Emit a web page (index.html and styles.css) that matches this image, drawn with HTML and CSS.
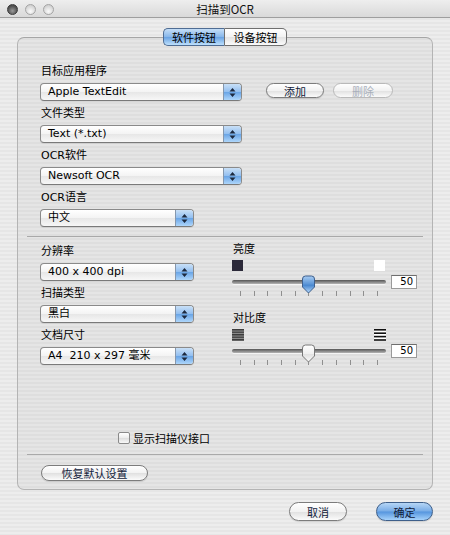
FILE: index.html
```html
<!DOCTYPE html>
<html lang="zh">
<head>
<meta charset="utf-8">
<title>扫描到OCR</title>
<link rel="stylesheet" href="styles.css">
</head>
<body>
<div class="window">
  <div class="titlebar">
    <div class="lights">
      <span class="light close"></span>
      <span class="light"></span>
      <span class="light"></span>
    </div>
    <div class="title">扫描到OCR</div>
  </div>

  <div class="tabs">
    <span class="tab sel">软件按钮</span><span class="tab">设备按钮</span>
  </div>

  <div class="box">
    <div class="sec1">
      <div class="field">
        <div class="label">目标应用程序</div>
        <div class="row">
          <div class="popup w-wide"><span class="ptext">Apple TextEdit</span><span class="arrows"><svg width="7" height="11" viewBox="0 0 7 11"><path d="M3.5 1 L6.5 4.5 L0.5 4.5 Z M0.5 6.5 L6.5 6.5 L3.5 10 Z" fill="#1d2a40"/></svg></span></div>
          <span class="btn mini add">添加</span>
          <span class="btn mini del disabled">删除</span>
        </div>
      </div>
      <div class="field">
        <div class="label">文件类型</div>
        <div class="popup w-wide"><span class="ptext">Text (*.txt)</span><span class="arrows"><svg width="7" height="11" viewBox="0 0 7 11"><path d="M3.5 1 L6.5 4.5 L0.5 4.5 Z M0.5 6.5 L6.5 6.5 L3.5 10 Z" fill="#1d2a40"/></svg></span></div>
      </div>
      <div class="field">
        <div class="label">OCR软件</div>
        <div class="popup w-wide"><span class="ptext">Newsoft OCR</span><span class="arrows"><svg width="7" height="11" viewBox="0 0 7 11"><path d="M3.5 1 L6.5 4.5 L0.5 4.5 Z M0.5 6.5 L6.5 6.5 L3.5 10 Z" fill="#1d2a40"/></svg></span></div>
      </div>
      <div class="field">
        <div class="label">OCR语言</div>
        <div class="popup w-short"><span class="ptext">中文</span><span class="arrows"><svg width="7" height="11" viewBox="0 0 7 11"><path d="M3.5 1 L6.5 4.5 L0.5 4.5 Z M0.5 6.5 L6.5 6.5 L3.5 10 Z" fill="#1d2a40"/></svg></span></div>
      </div>
    </div>

    <div class="sep sep1"></div>

    <div class="sec2">
      <div class="col-left">
        <div class="field">
          <div class="label">分辨率</div>
          <div class="popup w-short"><span class="ptext">400 x 400 dpi</span><span class="arrows"><svg width="7" height="11" viewBox="0 0 7 11"><path d="M3.5 1 L6.5 4.5 L0.5 4.5 Z M0.5 6.5 L6.5 6.5 L3.5 10 Z" fill="#1d2a40"/></svg></span></div>
        </div>
        <div class="field">
          <div class="label">扫描类型</div>
          <div class="popup w-short"><span class="ptext">黑白</span><span class="arrows"><svg width="7" height="11" viewBox="0 0 7 11"><path d="M3.5 1 L6.5 4.5 L0.5 4.5 Z M0.5 6.5 L6.5 6.5 L3.5 10 Z" fill="#1d2a40"/></svg></span></div>
        </div>
        <div class="field">
          <div class="label">文档尺寸</div>
          <div class="popup w-short"><span class="ptext">A4&nbsp; 210 x 297 毫米</span><span class="arrows"><svg width="7" height="11" viewBox="0 0 7 11"><path d="M3.5 1 L6.5 4.5 L0.5 4.5 Z M0.5 6.5 L6.5 6.5 L3.5 10 Z" fill="#1d2a40"/></svg></span></div>
        </div>
      </div>

      <div class="col-right">
        <div class="label rlabel">亮度</div>
        <div class="ends">
          <span class="sq sq-dark"></span>
          <span class="sq sq-white"></span>
        </div>
        <div class="slider-row">
          <div class="slider">
            <div class="track"></div>
            <div class="ticks"><i></i><i></i><i></i><i></i><i></i><i></i><i></i><i></i><i></i><i></i><i></i></div>
            <svg class="thumb" width="15" height="19" viewBox="0 0 15 19">
              <defs>
                <linearGradient id="gb" x1="0" y1="0" x2="0" y2="1">
                  <stop offset="0" stop-color="#a9cdf3"/>
                  <stop offset="0.45" stop-color="#5f98d8"/>
                  <stop offset="0.55" stop-color="#4a88d0"/>
                  <stop offset="1" stop-color="#b6dafc"/>
                </linearGradient>
              </defs>
              <path d="M1.5 4 Q1.5 1 4.5 1 L10.5 1 Q13.5 1 13.5 4 L13.5 12 L7.5 18 L1.5 12 Z" fill="url(#gb)" stroke="#3e5f8c" stroke-width="1"/>
            </svg>
          </div>
          <div class="num">50</div>
        </div>

        <div class="label rlabel lbl-contrast">对比度</div>
        <div class="ends">
          <svg class="cicon" width="12" height="12" viewBox="0 0 12 12">
            <rect x="0" y="0" width="12" height="12" fill="#8a8a8a"/>
            <rect x="0" y="0" width="12" height="1.5" fill="#3c3c3c"/>
            <rect x="0" y="2.5" width="12" height="1.5" fill="#4a4a4a"/>
            <rect x="0" y="5" width="12" height="1.5" fill="#3c3c3c"/>
            <rect x="0" y="7.5" width="12" height="1.5" fill="#4a4a4a"/>
            <rect x="0" y="10" width="12" height="1.5" fill="#3c3c3c"/>
          </svg>
          <svg class="cicon" width="12" height="12" viewBox="0 0 12 12">
            <rect x="0" y="0" width="12" height="12" fill="#ffffff"/>
            <rect x="0" y="0" width="12" height="1.6" fill="#111"/>
            <rect x="0" y="3.4" width="12" height="1.6" fill="#111"/>
            <rect x="0" y="6.8" width="12" height="1.6" fill="#111"/>
            <rect x="0" y="10.2" width="12" height="1.6" fill="#111"/>
          </svg>
        </div>
        <div class="slider-row">
          <div class="slider">
            <div class="track"></div>
            <div class="ticks"><i></i><i></i><i></i><i></i><i></i><i></i><i></i><i></i><i></i><i></i><i></i></div>
            <svg class="thumb" width="15" height="19" viewBox="0 0 15 19">
              <defs>
                <linearGradient id="gw" x1="0" y1="0" x2="0" y2="1">
                  <stop offset="0" stop-color="#ffffff"/>
                  <stop offset="0.5" stop-color="#f0f0f0"/>
                  <stop offset="0.55" stop-color="#e2e2e2"/>
                  <stop offset="1" stop-color="#fafafa"/>
                </linearGradient>
              </defs>
              <path d="M1.5 4 Q1.5 1 4.5 1 L10.5 1 Q13.5 1 13.5 4 L13.5 12 L7.5 18 L1.5 12 Z" fill="url(#gw)" stroke="#777" stroke-width="1"/>
            </svg>
          </div>
          <div class="num">50</div>
        </div>
      </div>
    </div>

    <div class="check-row">
      <span class="checkbox"></span>
      <span class="check-label">显示扫描仪接口</span>
    </div>

    <div class="sep sep2"></div>

    <div class="restore-row">
      <span class="btn restore">恢复默认设置</span>
    </div>
  </div>

  <div class="footer">
    <span class="btn big cancel">取消</span>
    <span class="btn big ok">确定</span>
  </div>
</div>
</body>
</html>
```

FILE: styles.css
```css
html, body {
  margin: 0;
  padding: 0;
}

body {
  width: 450px;
  height: 535px;
  overflow: hidden;
  font-family: "DejaVu Sans", "Noto Sans CJK SC", sans-serif;
  font-size: 11px;
  color: #000;
}

.window {
  width: 450px;
  height: 535px;
  background: repeating-linear-gradient(to bottom, #ededed 0, #ededed 2px, #e6e6e6 2px, #e6e6e6 4px);
  display: flex;
  flex-direction: column;
}

/* title bar */
.titlebar {
  height: 18px;
  box-sizing: border-box;
  border-bottom: 1px solid #9e9e9e;
  background: linear-gradient(to bottom, #eeeeee, #d9d9d9);
  display: flex;
  align-items: center;
}

.lights {
  display: flex;
  gap: 7px;
  padding-left: 7px;
  padding-top: 1px;
}

.light {
  width: 11px;
  height: 11px;
  box-sizing: border-box;
  border-radius: 50%;
  border: 1px solid #a4a4a4;
  background: radial-gradient(circle at 50% 70%, #fafafa, #d4d4d4 70%, #c2c2c2);
}

.light.close {
  border-color: #3a3a3a;
  background: radial-gradient(circle at 50% 65%, #9a9a9a, #555 60%, #3a3a3a);
}

.title {
  flex: 1;
  text-align: center;
  margin-left: -54px;
  font-family: "Noto Sans CJK SC", "DejaVu Sans", sans-serif;
  font-size: 11.5px;
  line-height: 16px;
  color: #111;
}

/* tabs */
.tabs {
  display: flex;
  justify-content: center;
  margin-top: 10px;
  position: relative;
  z-index: 1;
}

.tab {
  height: 18px;
  box-sizing: border-box;
  width: 62px;
  border: 1px solid #6f6f6f;
  font-family: "Noto Sans CJK SC", sans-serif;
  font-size: 11px;
  line-height: 16px;
  text-align: center;
  color: #000;
  background: linear-gradient(to bottom, #ffffff, #f2f2f2 50%, #e3e3e3 52%, #fbfbfb);
}

.tab.sel {
  border-radius: 5px 0 0 5px;
  border-color: #4f6d94;
  border-right-color: #6f6f6f;
  background: linear-gradient(to bottom, #c5def7, #86b6ea 50%, #6aa3e3 52%, #bde0fd);
}

.tab:last-child {
  border-radius: 0 5px 5px 0;
  border-left: none;
}

/* group box */
.box {
  margin: -9px 17px 0 17px;
  height: 453px;
  box-sizing: border-box;
  border: 1px solid #b4b4b4;
  border-top-color: #a6a6a6;
  border-radius: 7px;
  background: rgba(0, 0, 0, 0.03);
  padding: 27px 22px 0 22px;
  display: flex;
  flex-direction: column;
}

.sec1 {
  display: flex;
  flex-direction: column;
  gap: 6px;
}

.field {
  display: flex;
  flex-direction: column;
  gap: 4px;
}

.label {
  height: 14px;
  line-height: 14px;
  padding-left: 1px;
  font-size: 11px;
  white-space: nowrap;
}

.row {
  display: flex;
  align-items: flex-start;
}

/* popups */
.popup {
  height: 18px;
  box-sizing: border-box;
  border: 1px solid #8a8a8a;
  border-bottom-color: #7a7a7a;
  border-radius: 4px;
  background: linear-gradient(to bottom, #ffffff, #f3f3f3 50%, #e7e7e7 52%, #f7f7f7);
  display: flex;
  align-items: stretch;
  overflow: hidden;
  box-shadow: 0 1px 0 rgba(0,0,0,0.06);
}

.w-wide { width: 202px; }
.w-short { width: 154px; }

.ptext {
  flex: 1;
  padding-left: 7px;
  line-height: 16px;
  font-size: 11px;
  white-space: nowrap;
}

.arrows {
  width: 17px;
  border-left: 1px solid #8597ad;
  background: linear-gradient(to bottom, #c9e0f7, #93bff0 48%, #6aa5e6 52%, #aed6fb);
  display: flex;
  align-items: center;
  justify-content: center;
}

/* buttons */
.btn {
  box-sizing: border-box;
  display: flex;
  align-items: center;
  justify-content: center;
  font-family: "Noto Sans CJK SC", sans-serif;
  font-size: 11px;
  color: #10203a;
  border: 1px solid #7c7c7c;
  border-radius: 9px;
  background: linear-gradient(to bottom, #ffffff, #f2f2f2 50%, #e1e1e1 53%, #fbfbfb);
  box-shadow: 0 1px 1px rgba(0,0,0,0.12);
}

.mini {
  height: 15px;
  border-radius: 8px;
}

.add {
  width: 58px;
  margin-left: 24px;
}

.del {
  width: 60px;
  margin-left: 9px;
}

.disabled {
  color: #a9b0bb;
  border-color: #b9b9b9;
  box-shadow: none;
}

.sep {
  height: 1px;
  background: #a9a9a9;
  margin-left: -13px;
  margin-right: -13px;
}

.sep1 {
  margin-top: 9px;
}

/* section 2 */
.sec2 {
  display: flex;
  margin-top: 8px;
  gap: 38px;
}

.col-left {
  width: 154px;
  display: flex;
  flex-direction: column;
  gap: 6px;
}

.col-right {
  width: 185px;
  display: flex;
  flex-direction: column;
}

.rlabel {
  margin-top: -2px;
}

.rlabel.lbl-contrast {
  margin-top: 15px;
}

.ends {
  display: flex;
  justify-content: space-between;
  width: 154px;
  margin-top: 3px;
  height: 12px;
}

.sq {
  width: 11px;
  height: 11px;
  display: block;
}

.sq-dark {
  background: #2b2939;
}

.sq-white {
  background: #ffffff;
  margin-right: 1px;
}

.cicon {
  display: block;
}

.slider-row {
  display: flex;
  gap: 5px;
  margin-top: 3px;
}

.slider {
  position: relative;
  width: 154px;
  height: 22px;
}

.track {
  margin-top: 5px;
  height: 4px;
  border-radius: 2px;
  background: linear-gradient(to bottom, #555555, #8e8e8e 60%, #b5b5b5);
  box-shadow: 0 1px 0 rgba(255,255,255,0.6);
}

.ticks {
  margin: 7px 8px 0 8px;
  height: 5px;
  display: flex;
  justify-content: space-between;
}

.ticks i {
  display: block;
  width: 1px;
  height: 5px;
  background: #8f8f8f;
}

.thumb {
  position: absolute;
  left: 69px;
  top: 0;
}

.num {
  width: 26px;
  height: 14px;
  box-sizing: border-box;
  border: 1px solid #9a9a9a;
  border-top-color: #6e6e6e;
  background: #ffffff;
  font-size: 10px;
  line-height: 12px;
  text-align: right;
  padding-right: 3px;
}

/* checkbox */
.check-row {
  display: flex;
  align-items: center;
  gap: 3px;
  margin-top: 66px;
  margin-left: 78px;
  height: 12px;
}

.checkbox {
  width: 12px;
  height: 12px;
  box-sizing: border-box;
  border: 1px solid #8a8a8a;
  border-radius: 2px;
  background: linear-gradient(to bottom, #ffffff, #ececec 50%, #dedede 52%, #f8f8f8);
}

.check-label {
  font-family: "Noto Sans CJK SC", sans-serif;
  font-size: 11px;
  line-height: 12px;
}

.sep2 {
  margin-top: 10px;
}

.restore-row {
  display: flex;
  margin-top: 10px;
}

.restore {
  width: 107px;
  height: 16px;
  margin-left: 1px;
}

/* footer */
.footer {
  display: flex;
  justify-content: flex-end;
  gap: 29px;
  padding-right: 17px;
  margin-top: 12px;
}

.big {
  height: 19px;
  border-radius: 10px;
}

.cancel {
  width: 58px;
}

.ok {
  width: 57px;
  border-color: #3e5f8a;
  background: linear-gradient(to bottom, #b6d6f6, #78ace6 48%, #5595de 52%, #a6d2fb);
}
```
